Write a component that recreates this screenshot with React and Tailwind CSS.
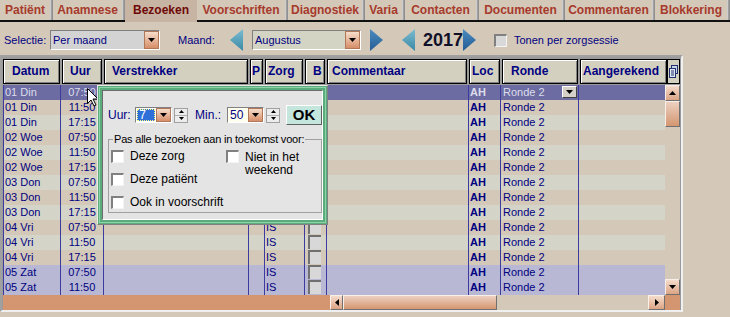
import React from 'react'

const tabs = [
  { label: 'Patiënt', w: 50 },
  { label: 'Anamnese', w: 69 },
  { label: 'Bezoeken', w: 72, active: true },
  { label: 'Voorschriften', w: 88 },
  { label: 'Diagnostiek', w: 74 },
  { label: 'Varia', w: 37 },
  { label: 'Contacten', w: 71 },
  { label: 'Documenten', w: 83 },
  { label: 'Commentaren', w: 87 },
  { label: 'Blokkering', w: 72 },
]

const headers = [
  { label: 'Datum', w: 57, pl: 8 },
  { label: 'Uur', w: 40, pl: 7 },
  { label: 'Verstrekker', w: 144, pl: 7 },
  { label: 'P', w: 13, pl: 1 },
  { label: 'Zorg', w: 38, pl: 2 },
  { label: 'B', w: 20, pl: 7 },
  { label: 'Commentaar', w: 140, pl: 4 },
  { label: 'Loc', w: 31, pl: 2 },
  { label: 'Ronde', w: 76, pl: 8 },
  { label: 'Aangerekend', w: 87, pl: 2 },
]

const rows = [
  ['01 Din', '07:50'], ['01 Din', '11:50'], ['01 Din', '17:15'],
  ['02 Woe', '07:50'], ['02 Woe', '11:50'], ['02 Woe', '17:15'],
  ['03 Don', '07:50'], ['03 Don', '11:50'], ['03 Don', '17:15'],
  ['04 Vri', '07:50'], ['04 Vri', '11:50'], ['04 Vri', '17:15'],
  ['05 Zat', '07:50'], ['05 Zat', '11:50'],
]

function rowClass(i) {
  if (i === 0) return 'bg-[#6c6ca2] text-[#dcdcec]'
  if (i >= 12) return 'bg-[#b8b8d4] text-[#000080]'
  return i % 2 ? 'bg-[#d4c8b8] text-[#000080]' : 'bg-[#d4d4c8] text-[#000080]'
}

function DropBtn() {
  return (
    <div className="flex items-center justify-center w-[15px] h-full bg-[linear-gradient(180deg,#f6dccb,#d68e68)] border border-[#b07858]">
      <svg width="7" height="4" viewBox="0 0 7 4"><path d="M0 0h7L3.5 4z" fill="#000" /></svg>
    </div>
  )
}

function Arrow({ dir, dark }) {
  const id = dark ? 'arrDark' : 'arrLight'
  return (
    <svg width="13" height="22" viewBox="0 0 13 22" className="block">
      <defs>
        <linearGradient id={id} x1="0" y1="0" x2="0" y2="1">
          <stop offset="0" stopColor={dark ? '#4a8cc0' : '#7cbcd0'} />
          <stop offset="1" stopColor={dark ? '#245c94' : '#3a88a6'} />
        </linearGradient>
      </defs>
      <polygon points={dir === 'left' ? '13,0 13,22 0,11' : '0,0 0,22 13,11'} fill={`url(#${id})`} />
    </svg>
  )
}

function Spin() {
  return (
    <div className="flex flex-col w-[14px] h-[15px] bg-[#ececec] border border-[#a0a0a0]">
      <div className="flex-1 flex items-center justify-center border-b border-[#b0b0b0]">
        <svg width="5" height="3" viewBox="0 0 5 3"><path d="M0 3h5L2.5 0z" fill="#000" /></svg>
      </div>
      <div className="flex-1 flex items-center justify-center">
        <svg width="5" height="3" viewBox="0 0 5 3"><path d="M0 0h5L2.5 3z" fill="#000" /></svg>
      </div>
    </div>
  )
}

function Check({ bg = 'bg-white' }) {
  return (
    <span className={`block shrink-0 w-[13px] h-[13px] ${bg} border-t-2 border-l-2 border-r border-b border-t-[#808080] border-l-[#808080] border-r-[#f4f4f4] border-b-[#f4f4f4]`} />
  )
}

function ScrollBtn({ dir }) {
  const horiz = dir === 'left' || dir === 'right'
  return (
    <div className="flex items-center justify-center w-full h-full bg-[linear-gradient(180deg,#f4dccc,#dca484)] border border-t-[#f8f0e8] border-l-[#f8f0e8] border-r-[#707070] border-b-[#707070]">
      {horiz ? (
        <svg width="4" height="7" viewBox="0 0 4 7">
          <path d={dir === 'left' ? 'M4 0v7L0 3.5z' : 'M0 0v7L4 3.5z'} fill="#000" />
        </svg>
      ) : (
        <svg width="7" height="4" viewBox="0 0 7 4">
          <path d={dir === 'up' ? 'M0 4h7L3.5 0z' : 'M0 0h7L3.5 4z'} fill="#000" />
        </svg>
      )}
    </div>
  )
}

export default function App() {
  return (
    <div className="relative w-[730px] h-[317px] overflow-hidden bg-[#d4c8b8] font-['Liberation_Sans',Arial,sans-serif]">
      {/* Tabs */}
      <div className="flex h-[22px]">
        {tabs.map((t) => (
          <React.Fragment key={t.label}>
            <div
              style={{ width: t.w }}
              className={
                t.active
                  ? 'h-[22px] bg-[#c8b4a2] text-[#6e0808] text-[12px] font-bold text-center leading-[20px]'
                  : 'h-[22px] bg-[#d4c8b8] border-b-2 border-[#101010] text-[#a63a2c] text-[12px] font-bold text-center leading-[20px]'
              }
            >
              {t.label}
            </div>
            {!t.active && (
              <div className="w-[3px] h-[22px] border-b-2 border-[#101010] bg-[linear-gradient(90deg,#e4e4e4,#a0a0a0_50%,#888)]" />
            )}
          </React.Fragment>
        ))}
      </div>

      {/* Selection row */}
      <div className="flex items-center h-[33px] pt-[3px] text-[11px] text-[#000080]">
        <span className="w-[46px] ml-[4px]">Selectie:</span>
        <div className="flex w-[110px] h-[20px] bg-[#d3d3d3] border border-t-[#808080] border-l-[#808080] border-r-white border-b-white">
          <span className="flex-1 pl-[2px] leading-[18px]">Per maand</span>
          <DropBtn />
        </div>
        <span className="w-[52px] ml-[18px]">Maand:</span>
        <Arrow dir="left" />
        <div className="flex w-[109px] h-[20px] ml-[9px] bg-[#d4d4c4] border border-t-[#808080] border-l-[#808080] border-r-white border-b-white">
          <span className="flex-1 pl-[2px] leading-[18px]">Augustus</span>
          <DropBtn />
        </div>
        <div className="ml-[9px]"><Arrow dir="right" dark /></div>
        <div className="ml-[19px]"><Arrow dir="left" /></div>
        <span className="w-[48px] pl-[8px] text-[18px] font-bold text-[#101028]">2017</span>
        <Arrow dir="right" dark />
        <div className="ml-[18px]"><Check bg="bg-[#d8d8d8]" /></div>
        <span className="ml-[7px]">Tonen per zorgsessie</span>
      </div>

      {/* Grid */}
      <div className="w-[683px] h-[257px] bg-[#9a9a9a] border-2 border-t-[#a0a0a0] border-l-[#a0a0a0] border-r-[#f0f0f0] border-b-[#f0f0f0] pl-[1px] pt-[2px]">
        {/* Header */}
        <div className="flex h-[26px] gap-[2px] text-[12px] font-bold text-[#000080]">
          {headers.map((h) => (
            <div
              key={h.label}
              style={{ width: h.w, paddingLeft: h.pl }}
              className="h-[25px] bg-[#d4d0c0] border border-black shadow-[inset_1px_1px_0_#ffffff,inset_-1px_-1px_0_#808080] leading-[23px] overflow-hidden whitespace-nowrap"
            >
              {h.label}
            </div>
          ))}
          <div className="w-[13px] h-[25px] -ml-[2px] bg-[#d4d0c0] border border-black flex items-center justify-center">
            <svg width="9" height="13" viewBox="0 0 9 13">
              <rect x="2.5" y="0.5" width="6" height="8" fill="#c8d4e8" stroke="#203070" />
              <rect x="0.5" y="3.5" width="6" height="9" fill="#e0e8f4" stroke="#203070" />
              <path d="M2 6h3M2 8h3M2 10h3" stroke="#203070" />
            </svg>
          </div>
        </div>

        {/* Body */}
        <div className="flex">
          <div className="w-[662px] text-[11px]">
            {rows.map(([d, t], i) => (
              <div key={i} className={`flex h-[15px] leading-[15px] ${rowClass(i)}`}>
                <div className="w-[57px] border-l border-[#3c3ca0] pl-[1px] whitespace-nowrap">{d}</div>
                <div className="w-[43px] border-l border-[#3c3ca0] text-center">{t}</div>
                <div className="w-[145px] border-l border-[#3c3ca0]" />
                <div className="w-[16px] border-l border-[#3c3ca0]" />
                <div className="w-[40px] border-l border-[#3c3ca0] pl-[1px]">{i >= 9 ? 'IS' : ''}</div>
                <div className="w-[22px] border-l border-[#3c3ca0] pl-[3px]">
                  <span className="block w-[13px] h-[14px] bg-[#d8d8d8] border-t-2 border-l-2 border-t-[#707070] border-l-[#707070]" />
                </div>
                <div className="w-[142px] border-l border-[#3c3ca0]" />
                <div className="w-[32px] border-l border-[#3c3ca0] pl-[1px] font-bold">AH</div>
                <div className="relative w-[78px] border-l border-[#3c3ca0] pl-[2px]">
                  Ronde 2
                  {i === 0 && (
                    <div className="absolute right-[1px] top-[1px] w-[15px] h-[12px] flex items-center justify-center bg-[#d4d0c8] border border-t-white border-l-white border-r-[#404040] border-b-[#404040]">
                      <svg width="7" height="4" viewBox="0 0 7 4"><path d="M0 0h7L3.5 4z" fill="#000" /></svg>
                    </div>
                  )}
                </div>
                <div className="w-[87px] border-l border-[#3c3ca0]" />
              </div>
            ))}
          </div>
          {/* Vertical scrollbar */}
          <div className="flex flex-col w-[15px] h-[210px] bg-[#d4c8b8]">
            <div className="h-[16px]"><ScrollBtn dir="up" /></div>
            <div className="h-[26px] bg-[linear-gradient(180deg,#ecd0c0,#d49670)] border border-t-[#f8f0e8] border-l-[#f8f0e8] border-r-[#707070] border-b-[#707070]" />
            <div className="flex-1" />
            <div className="h-[16px]"><ScrollBtn dir="down" /></div>
          </div>
        </div>

        {/* Horizontal scrollbar */}
        <div className="flex h-[15px]">
          <div className="w-[327px] bg-[#d49670]" />
          <div className="w-[13px]"><ScrollBtn dir="left" /></div>
          <div className="w-[154px] bg-[linear-gradient(180deg,#ecd0c0,#d49670)] border border-t-[#f8f0e8] border-l-[#f8f0e8] border-r-[#707070] border-b-[#707070]" />
          <div className="w-[151px] bg-[#d4c8b8]" />
          <div className="w-[17px]"><ScrollBtn dir="right" /></div>
          <div className="w-[15px] bg-[#d49670]" />
        </div>
      </div>

      {/* Mouse cursor */}
      <svg className="absolute left-[87px] top-[88px]" width="12" height="19" viewBox="0 0 12 19">
        <path d="M0.5 0.5v15l3.5-3.5 3 6 2-1-3-6h5z" fill="#fff" stroke="#000" />
      </svg>

      {/* Popup */}
      <div className="absolute left-[97px] top-[85px] w-[231px] h-[140px] border border-t-[#e8e8e8] border-l-[#e8e8e8] border-r-[#808080] border-b-[#808080] bg-[#5aac7c] p-[1px]">
        <div className="w-full h-full bg-[#8ed2a8] p-[1px]">
          <div className="w-full h-full bg-[#5aac7c] p-[2px]">
            <div className="w-full h-full bg-[#e4e4e4] border border-t-[#6c6c6c] border-l-[#6c6c6c] border-r-white border-b-white pl-[5px] pt-[14px] text-[12px] leading-[14px]">
              {/* Time row */}
              <div className="flex items-center h-[20px]">
                <span className="w-[28px] text-[#000080]">Uur:</span>
                <div className="flex w-[38px] h-[16px] bg-white border border-t-[#808080] border-l-[#808080] border-r-white border-b-white">
                  <div className="flex-1 p-[1px]">
                    <div className="w-full h-full bg-[#2f6fd8] border border-dotted border-[#ffff80] text-white leading-[11px] pl-[1px]">7</div>
                  </div>
                  <DropBtn />
                </div>
                <div className="ml-[2px]"><Spin /></div>
                <span className="w-[33px] ml-[7px] text-[#000080]">Min.:</span>
                <div className="flex w-[38px] h-[16px] bg-[#fffff0] border border-t-[#808080] border-l-[#808080] border-r-white border-b-white">
                  <span className="flex-1 leading-[14px] pl-[2px] text-[#000080]">50</span>
                  <DropBtn />
                </div>
                <div className="ml-[2px]"><Spin /></div>
                <div className="ml-[6px] w-[37px] h-[20px] bg-[#c4e6dc] border border-t-white border-l-white border-r-[#606060] border-b-[#606060] text-center font-bold text-[15px] leading-[18px] text-black">
                  OK
                </div>
              </div>

              {/* Group box */}
              <fieldset className="mt-[8px] w-[214px] h-[80px] border border-[#a0a0a0] px-[2px] pt-[4px]">
                <legend className="ml-[2px] px-[1px] text-[11px] tracking-[-0.2px] text-black leading-[12px] whitespace-nowrap">Pas alle bezoeken aan in toekomst voor:</legend>
                <div className="flex text-[12px] leading-[14px] text-black">
                  <div className="w-[115px] flex flex-col gap-[9px]">
                    <div className="flex items-center gap-[6px] h-[14px]"><Check /><span>Deze zorg</span></div>
                    <div className="flex items-center gap-[6px] h-[14px]"><Check /><span>Deze patiënt</span></div>
                    <div className="flex items-center gap-[6px] h-[14px]"><Check /><span className="whitespace-nowrap">Ook in voorschrift</span></div>
                  </div>
                  <div className="flex gap-[6px] pt-[1px]">
                    <Check />
                    <span className="leading-[13px] mt-[1px]">Niet in het<br />weekend</span>
                  </div>
                </div>
              </fieldset>
            </div>
          </div>
        </div>
      </div>
    </div>
  )
}
